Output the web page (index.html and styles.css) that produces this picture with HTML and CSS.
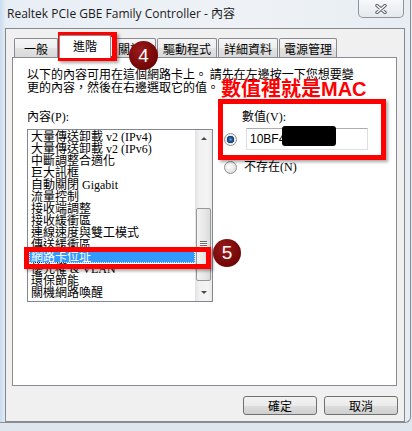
FILE: index.html
```html
<!DOCTYPE html>
<html lang="zh-Hant">
<head>
    <meta charset="utf-8">
    <meta name="viewport" content="width=device-width, initial-scale=1.0">
    <title>Realtek PCIe GBE Family Controller - 內容</title>
    <link rel="stylesheet" href="styles.css">
</head>
<body>
    <div class="window">
        <div class="titlebar">
            <span class="title">Realtek PCIe GBE Family Controller - 內容</span>
            <div class="close-btn">
                <svg width="12" height="10" viewBox="0 0 12 10">
                    <path d="M2 1.5 L10 8.5 M10 1.5 L2 8.5" stroke="#5a5f66" stroke-width="3.4" stroke-linecap="round"/>
                    <path d="M2 1.5 L10 8.5 M10 1.5 L2 8.5" stroke="#ffffff" stroke-width="1.4" stroke-linecap="round"/>
                </svg>
            </div>
        </div>

        <div class="client">
            <div class="tabs">
                <div class="tab tab-general">一般</div>
                <div class="tab tab-advanced active">進階</div>
                <div class="tab tab-about">關於</div>
                <div class="tab tab-wide">驅動程式</div>
                <div class="tab tab-wide">詳細資料</div>
                <div class="tab tab-power">電源管理</div>
            </div>

            <div class="panel">
                <p class="intro">以下的內容可用在這個網路卡上。 請先在左邊按一下您想要變<br>更的內容，然後在右邊選取它的值。</p>

                <div class="settings">
                    <div class="prop-col">
                        <div class="label">內容(P):</div>
                        <div class="listbox">
                            <ul class="items">
                                <li>大量傳送卸載 v2 (IPv4)</li>
                                <li>大量傳送卸載 v2 (IPv6)</li>
                                <li>中斷調整合適化</li>
                                <li>巨大訊框</li>
                                <li>自動關閉 Gigabit</li>
                                <li>流量控制</li>
                                <li>接收端調整</li>
                                <li>接收緩衝區</li>
                                <li>連線速度與雙工模式</li>
                                <li>傳送緩衝區</li>
                                <li class="selected">網路卡位址</li>
                                <li>優先權 &amp; VLAN</li>
                                <li>環保節能</li>
                                <li>關機網路喚醒</li>
                            </ul>
                            <div class="scrollbar">
                                <div class="sb-btn up"></div>
                                <div class="sb-track">
                                    <div class="sb-thumb">
                                        <span></span><span></span><span></span><span></span>
                                    </div>
                                </div>
                                <div class="sb-btn down"></div>
                            </div>
                        </div>
                    </div>

                    <div class="value-col">
                        <div class="label value-label">數值(V):</div>
                        <div class="value-row">
                            <span class="radio checked"></span>
                            <div class="textbox">10BF4</div>
                        </div>
                        <div class="value-row none-row">
                            <span class="radio"></span>
                            <span class="label radio-label">不存在(N)</span>
                        </div>
                    </div>
                </div>
            </div>

            <div class="dialog-buttons">
                <button class="btn">確定</button>
                <button class="btn">取消</button>
            </div>
        </div>

        <!-- annotations drawn over the dialog -->
        <div class="mark mark-tab"></div>
        <div class="step step-4">4</div>
        <div class="note">數值裡就是<span class="latin">MAC</span></div>
        <div class="mark mark-value"></div>
        <div class="redact"></div>
        <div class="mark mark-item"></div>
        <div class="step step-5">5</div>
    </div>
</body>
</html>
```

FILE: styles.css
```css
* {
    margin: 0;
    padding: 0;
    box-sizing: border-box;
}

body {
    width: 412px;
    height: 431px;
    overflow: hidden;
    background: linear-gradient(#e6edf3, #dfe6ee);
    font-family: 'Liberation Serif', 'Noto Sans CJK TC', serif;
    font-size: 12px;
    color: #000;
}

.window {
    position: relative;
    width: 411px;
    height: 423px;
    background: linear-gradient(90deg, #c9dcef 0, #e8eef5 6px, #eef2f6 60%, #e7edf3 100%);
    border-right: 1px solid #8a8e94;
    border-bottom: 1px solid #8a8e94;
    border-bottom-right-radius: 6px;
}

/* Title bar */
.titlebar {
    height: 28px;
    display: flex;
    align-items: flex-start;
}

.title {
    font-family: 'Open Sans', 'Noto Sans CJK TC', sans-serif;
    font-size: 12px;
    line-height: 16px;
    padding: 6px 0 0 7px;
    color: #1b1b1b;
}

.close-btn {
    margin-left: auto;
    margin-right: 6px;
    width: 46px;
    height: 18px;
    border: 1px solid #8e949b;
    border-top: none;
    border-radius: 0 0 5px 5px;
    background: linear-gradient(#f6f8fa, #e4e9ee);
    display: flex;
    align-items: center;
    justify-content: center;
}

/* Client area */
.client {
    margin-left: 5px;
    width: 400px;
    height: 394px;
    border: 1px solid #858a90;
    background: #f0f0f0;
    padding-left: 6px;
}

.tabs {
    display: flex;
    align-items: flex-end;
    height: 22px;
    margin-top: 6px;
    padding-left: 2px;
}

.tab {
    height: 19px;
    margin-right: 1px;
    border: 1px solid #898c95;
    border-bottom: none;
    border-radius: 2px 2px 0 0;
    background: linear-gradient(#f6f6f6, #eeeeee 50%, #e3e3e3 51%, #d9d9d9);
    display: flex;
    align-items: center;
    justify-content: center;
    font-family: 'Noto Sans CJK TC', sans-serif;
    font-size: 12px;
}

.tab-general { width: 44px; }
.tab-advanced { width: 52px; }
.tab-about { width: 44px; justify-content: flex-start; padding-left: 5px; }
.tab-wide { width: 60px; }
.tab-power { width: 58px; }

.tab.active {
    height: 23px;
    margin-bottom: -1px;
    background: #fff;
    position: relative;
    z-index: 1;
    padding-bottom: 3px;
}

.panel {
    width: 385px;
    height: 329px;
    border: 1px solid #898c95;
    background: #fff;
    padding: 9px 14px 0 14px;
}

.intro {
    font-family: 'Noto Sans CJK TC', sans-serif;
    line-height: 13px;
}

.settings {
    display: flex;
    margin-top: 18px;
}

.label {
    line-height: 13px;
}

/* List box */
.listbox {
    margin-top: 5px;
    width: 186px;
    height: 173px;
    border: 1px solid #828790;
    display: flex;
    background: #fff;
}

.items {
    list-style: none;
    flex: 1;
    padding-top: 1px;
    overflow: hidden;
}

.items li {
    height: 12px;
    line-height: 12px;
    margin-left: 1px;
    padding-left: 2px;
    white-space: nowrap;
}

.items li.selected {
    background: #3399ff;
    color: #fff;
    outline: 1px dotted #dcecff;
    outline-offset: -1px;
}

.scrollbar {
    width: 17px;
    display: flex;
    flex-direction: column;
    background: linear-gradient(90deg, #e2e2e2, #f1f1f1 25%, #f4f4f4 75%, #e9e9e9);
}

.sb-btn {
    height: 17px;
    display: flex;
    align-items: center;
    justify-content: center;
}

.sb-btn::before {
    content: '';
    width: 0;
    height: 0;
    border-left: 3px solid transparent;
    border-right: 3px solid transparent;
}

.sb-btn.up::before {
    border-bottom: 3px solid #4a4a4a;
}

.sb-btn.down::before {
    border-top: 3px solid #4a4a4a;
}

.sb-track {
    flex: 1;
    padding-top: 61px;
}

.sb-thumb {
    height: 73px;
    margin: 0 1px;
    border: 1px solid #979797;
    border-radius: 2px;
    background: linear-gradient(90deg, #f3f3f3, #e9e9e9 50%, #dcdcdc);
    display: flex;
    flex-direction: column;
    align-items: center;
    justify-content: center;
    gap: 1px;
}

.sb-thumb span {
    width: 7px;
    height: 1px;
    background: #6b6b6b;
    box-shadow: 0 1px 0 #fff;
}

/* Value column */
.value-col {
    margin-left: 11px;
}

.value-label {
    padding-left: 18px;
}

.value-row {
    display: flex;
    align-items: center;
    margin-top: 4px;
    height: 22px;
}

.radio {
    flex: none;
    width: 13px;
    height: 13px;
    border-radius: 50%;
    border: 1px solid #8e8f8f;
    background: radial-gradient(circle at 40% 35%, #ffffff, #e6e6e6 60%, #d4d4d4);
}

.radio.checked {
    background: radial-gradient(circle at 50% 50%, #7db2e2 0, #2862a1 1.5px, #123c6b 3.5px, #e6e6e6 4px, #ffffff 6px);
}

.textbox {
    margin-left: 9px;
    width: 122px;
    height: 22px;
    border: 1px solid #dbdfe6;
    border-top-color: #abadb3;
    background: #fff;
    font-family: 'Liberation Sans', sans-serif;
    font-size: 12px;
    line-height: 20px;
    padding-left: 3px;
}

.none-row {
    margin-top: 11px;
    height: 13px;
}

.radio-label {
    margin-left: 7px;
}

/* Bottom buttons */
.dialog-buttons {
    display: flex;
    justify-content: flex-end;
    gap: 7px;
    margin-top: 10px;
    padding-right: 6px;
}

.btn {
    width: 74px;
    height: 19px;
    border: 1px solid #707070;
    border-radius: 3px;
    background: linear-gradient(#f2f2f2, #ebebeb 50%, #dddddd 51%, #cfcfcf);
    font-family: 'Noto Sans CJK TC', sans-serif;
    font-size: 12px;
    line-height: 17px;
    color: #000;
}

/* Annotations */
.mark {
    position: absolute;
    border: 5px solid #ff0000;
    box-shadow: 2px 2px 3px rgba(0, 0, 0, 0.35);
}

.mark-tab {
    left: 58px;
    top: 32px;
    width: 59px;
    height: 29px;
}

.mark-value {
    left: 218px;
    top: 99px;
    width: 168px;
    height: 61px;
}

.mark-item {
    left: 24px;
    top: 247px;
    width: 187px;
    height: 22px;
}

.step {
    position: absolute;
    border-radius: 50%;
    background: radial-gradient(circle at 40% 35%, #9b1a1a, #740707 65%, #5e0404);
    color: #fff;
    font-family: 'Liberation Sans', sans-serif;
    font-size: 19px;
    display: flex;
    align-items: center;
    justify-content: center;
}

.step-4 {
    left: 129px;
    top: 41px;
    width: 29px;
    height: 29px;
}

.step-5 {
    left: 213px;
    top: 239px;
    width: 28px;
    height: 28px;
}

.note {
    position: absolute;
    left: 221px;
    top: 78px;
    color: #ff0000;
    font-family: 'Noto Sans CJK TC', sans-serif;
    font-weight: 700;
    font-size: 20px;
    line-height: 20px;
    white-space: nowrap;
}

.note .latin {
    font-family: 'Liberation Sans', sans-serif;
}

.redact {
    position: absolute;
    left: 282px;
    top: 126px;
    width: 54px;
    height: 20px;
    background: #000;
    border-radius: 3px;
    filter: blur(0.6px);
}
```
